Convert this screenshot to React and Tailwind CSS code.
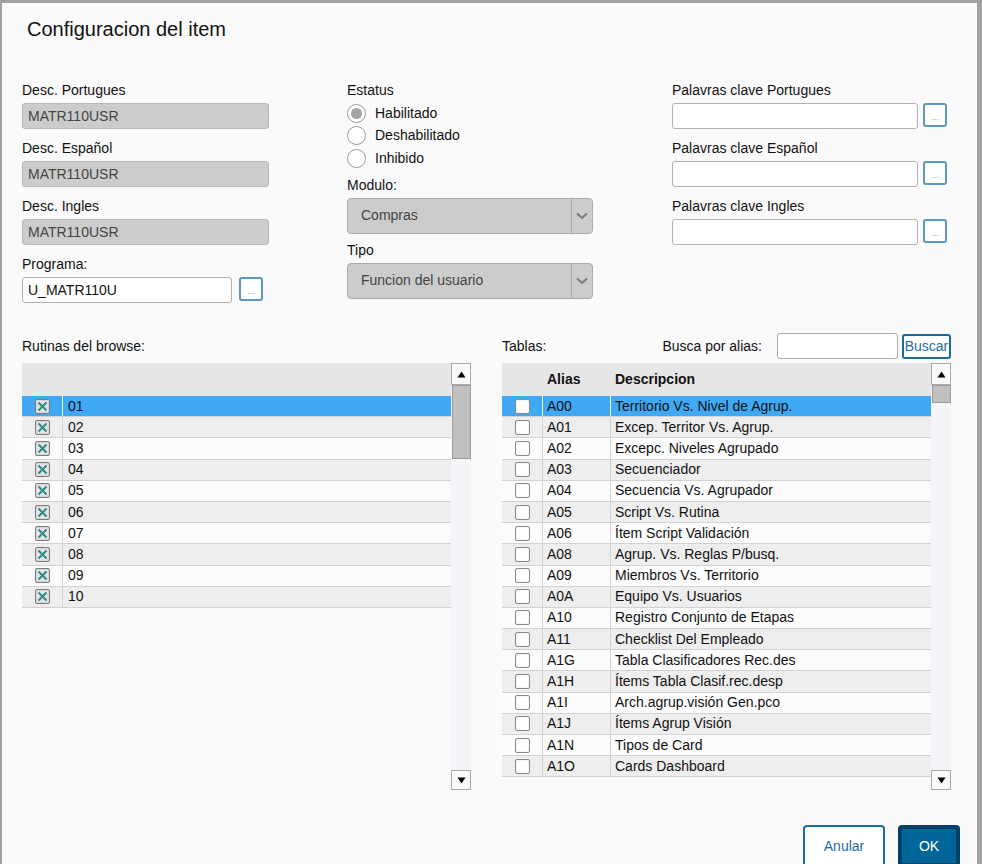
const rutinas = ['01', '02', '03', '04', '05', '06', '07', '08', '09', '10']

const tablas = [
  ['A00', 'Territorio Vs. Nivel de Agrup.'],
  ['A01', 'Excep. Territor Vs. Agrup.'],
  ['A02', 'Excepc. Niveles Agrupado'],
  ['A03', 'Secuenciador'],
  ['A04', 'Secuencia Vs. Agrupador'],
  ['A05', 'Script Vs. Rutina'],
  ['A06', 'Ítem Script Validación'],
  ['A08', 'Agrup. Vs. Reglas P/busq.'],
  ['A09', 'Miembros Vs. Territorio'],
  ['A0A', 'Equipo Vs. Usuarios'],
  ['A10', 'Registro Conjunto de Etapas'],
  ['A11', 'Checklist Del Empleado'],
  ['A1G', 'Tabla Clasificadores Rec.des'],
  ['A1H', 'Ítems Tabla Clasif.rec.desp'],
  ['A1I', 'Arch.agrup.visión Gen.pco'],
  ['A1J', 'Ítems Agrup Visión'],
  ['A1N', 'Tipos de Card'],
  ['A1O', 'Cards Dashboard'],
]

function Label({ children }) {
  return <div className="h-[16px] text-[14px] leading-[16px] text-[#111]">{children}</div>
}

function DisabledInput({ value }) {
  return (
    <div className="mt-[5px] flex h-[26px] w-[247px] items-center rounded-[3px] border border-[#b8b8b8] bg-[#cccccc] px-[5px] text-[14px] text-[#444]">
      {value}
    </div>
  )
}

function DotsButton({ className = '' }) {
  return (
    <button
      type="button"
      className={`flex h-[24px] w-[24px] items-end justify-center rounded-[3px] border-2 border-[#5a98bd] bg-white pb-[3px] text-[9px] leading-[9px] text-[#7fa9c6] ${className}`}
    >
      ...
    </button>
  )
}

function Radio({ checked, label }) {
  return (
    <div className="flex h-[22.5px] items-center">
      <span className="flex h-[19px] w-[19px] items-center justify-center rounded-full border border-[#9a9a9a] bg-white">
        {checked && <span className="h-[11px] w-[11px] rounded-full bg-[#a3a3a3]" />}
      </span>
      <span className="ml-[9px] text-[14px] text-[#111]">{label}</span>
    </div>
  )
}

function Select({ value }) {
  return (
    <div className="mt-[5px] flex h-[36px] w-[246px] items-center rounded-[4px] border border-[#ababab] bg-[#cccccc]">
      <span className="flex-1 pl-[13px] text-[14px] text-[#444]">{value}</span>
      <span className="flex h-full w-[21px] items-center justify-center border-l border-[#ababab]">
        <svg width="12" height="8" viewBox="0 0 12 8">
          <path d="M1 1.5 L6 6 L11 1.5" fill="none" stroke="#7a7a7a" strokeWidth="2" />
        </svg>
      </span>
    </div>
  )
}

function CheckedBox() {
  return (
    <svg width="15" height="15" viewBox="0 0 15 15">
      <rect x="0.5" y="0.5" width="14" height="14" rx="1.5" fill="#d6d6d6" stroke="#7c7c7c" />
      <rect x="2" y="2" width="11" height="11" fill="#e4e4e4" />
      <path d="M3.5 3.5 L11.5 11.5 M11.5 3.5 L3.5 11.5" stroke="#2f8b85" strokeWidth="2" />
    </svg>
  )
}

function EmptyBox() {
  return (
    <span className="block h-[15px] w-[15px] rounded-[2px] border border-[#8a8a8a] bg-white shadow-[inset_0_0_1px_rgba(0,0,0,0.3)]" />
  )
}

function Arrow({ up }) {
  return (
    <svg width="9" height="7" viewBox="0 0 9 7">
      <path d={up ? 'M0.5 6.5 L4.5 0.5 L8.5 6.5 Z' : 'M0.5 0.5 L4.5 6.5 L8.5 0.5 Z'} fill="#000" />
    </svg>
  )
}

function Scrollbar({ thumb }) {
  return (
    <div className="flex h-full w-[20px] flex-col bg-[#f4f5f9]">
      <div className="flex h-[22px] items-center justify-center border border-[#a9a9a9] bg-[#f9f9f9]">
        <Arrow up />
      </div>
      <div className={`ml-[1px] border border-[#9c9c9c] bg-[#c0c0c0] ${thumb}`} />
      <div className="flex-1" />
      <div className="flex h-[20px] items-center justify-center border border-[#a9a9a9] bg-[#f9f9f9]">
        <Arrow />
      </div>
    </div>
  )
}

function rowBg(i) {
  if (i === 0) return 'bg-[#3fa9f5] border-[#3fa9f5]'
  return i % 2 === 1 ? 'bg-[#eeeeee]' : 'bg-[#fcfcfc]'
}

function cellLine(i) {
  return i === 0 ? 'border-r border-[#e8f4fd]' : 'border-r border-[#d2d2d2]'
}

export default function App() {
  return (
    <div className="h-[864px] overflow-hidden bg-[#a2a2a2] pt-[3px] pl-[2px] pr-[5px] font-['Liberation_Sans',Arial,sans-serif]">
      <div className="h-[900px] bg-[#fafafa]">
        <h1 className="pt-[14px] pl-[25px] text-[20px] leading-[24px] text-[#111]">Configuracion del item</h1>

        <div className="mt-[41px] flex pl-[20px]">
          <div className="w-[325px]">
            <Label>Desc. Portugues</Label>
            <DisabledInput value="MATR110USR" />
            <div className="mt-[11px]">
              <Label>Desc. Español</Label>
            </div>
            <DisabledInput value="MATR110USR" />
            <div className="mt-[11px]">
              <Label>Desc. Ingles</Label>
            </div>
            <DisabledInput value="MATR110USR" />
            <div className="mt-[11px]">
              <Label>Programa:</Label>
            </div>
            <div className="mt-[5px] flex items-start">
              <div className="flex h-[26px] w-[210px] items-center rounded-[3px] border border-[#b0b0b0] bg-white px-[5px] text-[14px] text-[#111]">
                U_MATR110U
              </div>
              <DotsButton className="ml-[7px]" />
            </div>
          </div>

          <div className="w-[325px]">
            <Label>Estatus</Label>
            <div className="mt-[4px]">
              <Radio checked label="Habilitado" />
              <Radio label="Deshabilitado" />
              <Radio label="Inhibido" />
            </div>
            <div className="mt-[7px]">
              <Label>Modulo:</Label>
            </div>
            <Select value="Compras" />
            <div className="mt-[8px]">
              <Label>Tipo</Label>
            </div>
            <Select value="Funcion del usuario" />
          </div>

          <div>
            {['Palavras clave Portugues', 'Palavras clave Español', 'Palavras clave Ingles'].map((l, i) => (
              <div key={l} className={i > 0 ? 'mt-[11px]' : ''}>
                <Label>{l}</Label>
                <div className="mt-[5px] flex items-start">
                  <div className="h-[26px] w-[246px] rounded-[3px] border border-[#b0b0b0] bg-white" />
                  <DotsButton className="ml-[5px]" />
                </div>
              </div>
            ))}
          </div>
        </div>

        <div className="mt-[30px] flex gap-[31px] pl-[20px]">
          <div className="w-[449px]">
            <div className="flex h-[26px] items-center text-[14px] text-[#111]">Rutinas del browse:</div>
            <div className="mt-[4px] flex h-[427px]">
              <div className="flex-1">
                <div className="h-[33px] bg-[#e6e6e6]" />
                {rutinas.map((r, i) => (
                  <div key={r} className={`flex h-[21.2px] border-b border-[#d2d2d2] ${rowBg(i)}`}>
                    <div className={`flex w-[41px] items-center justify-center ${cellLine(i)}`}>
                      <CheckedBox />
                    </div>
                    <div className="flex items-center pl-[5px] text-[14px] text-[#111]">{r}</div>
                  </div>
                ))}
              </div>
              <Scrollbar thumb="h-[74px]" />
            </div>
          </div>

          <div className="w-[449px]">
            <div className="flex h-[26px] items-center text-[14px] text-[#111]">
              <span>Tablas:</span>
              <div className="ml-auto flex items-center">
                <span>Busca por alias:</span>
                <div className="ml-[15px] h-[26px] w-[121px] rounded-[3px] border border-[#ababab] bg-white" />
                <button
                  type="button"
                  className="ml-[4px] h-[25px] w-[49px] rounded-[3px] border-2 border-[#1b6a9c] bg-white text-[14px] leading-[20px] text-[#1f6d9d]"
                >
                  Buscar
                </button>
              </div>
            </div>
            <div className="mt-[4px] flex h-[427px]">
              <div className="flex-1">
                <div className="flex h-[33px] items-center bg-[#e6e6e6] text-[14px] font-bold text-[#111]">
                  <span className="w-[41px]" />
                  <span className="w-[68px] pl-[4px]">Alias</span>
                  <span className="pl-[4px]">Descripcion</span>
                </div>
                {tablas.map(([a, d], i) => (
                  <div key={a} className={`flex h-[21.2px] border-b border-[#d2d2d2] text-[14px] text-[#111] ${rowBg(i)}`}>
                    <div className={`flex w-[41px] items-center justify-center ${cellLine(i)}`}>
                      <EmptyBox />
                    </div>
                    <div className={`flex w-[68px] items-center pl-[4px] ${cellLine(i)}`}>{a}</div>
                    <div className="flex items-center pl-[4px]">{d}</div>
                  </div>
                ))}
              </div>
              <Scrollbar thumb="h-[18px]" />
            </div>
          </div>
        </div>

        <div className="mt-[35px] flex justify-end gap-[13px] pr-[17px]">
          <button
            type="button"
            className="h-[42px] w-[82px] rounded-[4px] border-2 border-[#1a6c9e] bg-white text-[14px] text-[#1f6d9d]"
          >
            Anular
          </button>
          <button
            type="button"
            className="h-[42px] w-[62px] rounded-[4px] border-4 border-[#003f66] bg-[#006699] text-[14px] text-white"
          >
            OK
          </button>
        </div>
      </div>
    </div>
  )
}
